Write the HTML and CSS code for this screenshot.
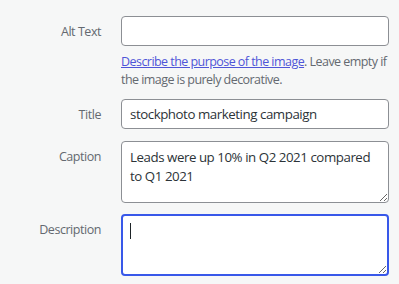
FILE: index.html
```html
<!DOCTYPE html>
<html lang="en">
<head>
<meta charset="utf-8">
<link rel="stylesheet" href="styles.css">
</head>
<body>
<form class="settings">
  <div class="row">
    <label class="label" for="alt">Alt Text</label>
    <div class="field">
      <input class="input" id="alt" type="text">
      <p class="help"><a href="#" class="help-link">Describe the purpose of the image</a>. Leave empty if the image is purely decorative.</p>
    </div>
  </div>
  <div class="row row-title">
    <label class="label" for="title">Title</label>
    <div class="field">
      <input class="input" id="title" type="text" value="stockphoto marketing campaign">
    </div>
  </div>
  <div class="row row-caption">
    <label class="label" for="caption">Caption</label>
    <div class="field">
      <textarea class="input textarea" id="caption">Leads were up 10% in Q2 2021 compared to Q1 2021</textarea>
    </div>
  </div>
  <div class="row row-desc">
    <label class="label" for="desc">Description</label>
    <div class="field caret-wrap">
      <textarea class="input textarea is-focused" id="desc"></textarea>
      <span class="caret"></span>
    </div>
  </div>
</form>
</body>
</html>
```

FILE: styles.css
```css
html, body {
  margin: 0;
  padding: 0;
  background: #f6f7f7;
}
body {
  font-family: "Open Sans", "Noto Sans", sans-serif;
  font-size: 12.5px;
  letter-spacing: -0.45px;
  color: #50575e;
}
.settings {
  padding: 16px 10px 0 0;
  display: flex;
  flex-direction: column;
}
.row {
  display: grid;
  grid-template-columns: 101px 268px;
  column-gap: 20px;
  align-items: start;
}
.row-title { margin-top: 10px; }
.row-caption { margin-top: 12px; }
.row-desc { margin-top: 11px; }
.label {
  text-align: right;
  line-height: 19px;
  padding-top: 6px;
  color: #646970;
}
.field {
  display: flex;
  flex-direction: column;
}
.input {
  box-sizing: border-box;
  width: 268px;
  height: 30px;
  margin: 0;
  border: 1px solid #8c8f94;
  border-radius: 4px;
  background: #fff;
  font-family: inherit;
  font-size: 13.3px;
  letter-spacing: -0.45px;
  color: #2c3338;
  padding: 0 8px;
  outline: none;
}
.textarea {
  height: 62px;
  padding: 6px 8px;
  line-height: 19px;
  resize: vertical;
}
.is-focused {
  border: 2px solid #3858e9;
  padding: 5px 7px;
}
.help {
  margin: 7px 0 0;
  line-height: 18px;
  letter-spacing: -0.55px;
  color: #646970;
}
.help-link {
  color: #4f55d8;
}
.caret-wrap {
  position: relative;
}
.caret {
  position: absolute;
  left: 9px;
  top: 9px;
  width: 1px;
  height: 16px;
  background: #1d2327;
}
```
